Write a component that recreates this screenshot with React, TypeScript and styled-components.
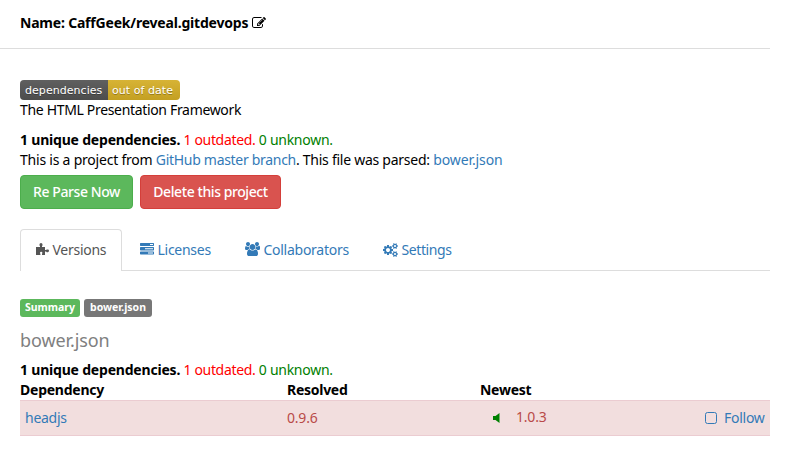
import React from "react";
import styled, { createGlobalStyle } from "styled-components";

const Global = createGlobalStyle`
  * { box-sizing: border-box; }
  body { margin: 0; background: #fff; color: #000; font: 14px/20px "Noto Sans", sans-serif; }
`;

const Page = styled.main`width: 770px; height: 462px; overflow: hidden;`;
const Header = styled.header`
  height: 49px; padding: 13px 20px 0; border-bottom: 1px solid #ddd;
  display: flex; gap: 4px;
`;
const Content = styled.div`padding: 31px 0 0 20px;`;
const Fit = styled.span<{ $ls?: number }>`
  white-space: pre; letter-spacing: ${(p) => p.$ls ?? -0.27}px;
`;
const Bold = styled(Fit)`font-weight: 700;`;
const Link = styled(Fit)`color: #337ab7;`;
const Red = styled(Fit)`color: #ff0000;`;
const Green = styled(Fit)`color: #008000;`;
const Line = styled.div<{ $top?: number }>`
  display: flex; height: 20px; margin-top: ${(p) => p.$top ?? 0}px;
`;
const Badge = styled.div`
  display: flex; width: 160px; height: 20px; border-radius: 4px; overflow: hidden;
  color: #fff; font: 11px/21px "DejaVu Sans", sans-serif; text-shadow: 0 1px 0 rgba(1,1,1,.3);
`;
const BadgePart = styled.span<{ $w: number; $bg: string; $pad: number }>`
  width: ${(p) => p.$w}px; padding-left: ${(p) => p.$pad}px; white-space: nowrap; letter-spacing: .05px;
  background: linear-gradient(rgba(187,187,187,.1), rgba(0,0,0,.1)), ${(p) => p.$bg};
`;
const Buttons = styled.div`display: flex; gap: 7px; margin-top: 5px;`;
const Button = styled.button<{ $w: number; $bg: string; $line: string }>`
  width: ${(p) => p.$w}px; height: 34px; padding: 0; border: 1px solid ${(p) => p.$line};
  border-radius: 4px; background: ${(p) => p.$bg}; color: #fff;
  font: 500 14px/20px "Noto Sans", sans-serif; white-space: nowrap; letter-spacing: -.42px;
`;
const Tabs = styled.nav`
  display: flex; height: 42px; margin-top: 20px; border-bottom: 1px solid #ddd; color: #337ab7;
`;
const Tab = styled.div<{ $w: number; $active?: boolean }>`
  display: flex; gap: 3.500px; width: ${(p) => p.$w}px; height: 42px; padding: 10px 0 0 15px; margin-right: 2px;
  border: 1px solid ${(p) => (p.$active ? "#ddd" : "transparent")}; border-bottom: 0;
  border-radius: 4px 4px 0 0;
  ${(p) => p.$active && "background: #fff; color: #555;"}
`;
const Glyph = styled.svg<{ $top?: number }>`
  display: block; flex: none; fill: currentColor; margin-top: ${(p) => p.$top ?? 0}px;
`;
const Labels = styled.div`display: flex; gap: 4px; margin-top: 28px;`;
const Label = styled.span<{ $w: number; $bg: string }>`
  width: ${(p) => p.$w}px; height: 18px; border-radius: 3px; background: ${(p) => p.$bg};
  color: #fff; font-weight: 700; font-size: 10.5px; line-height: 17px; text-align: center; white-space: nowrap;
`;
const Heading = styled.h4`
  margin: 13px 0 10px; height: 20px; font-size: 18px; line-height: 20px; font-weight: 400; color: #808080;
  letter-spacing: -.1px;
`;
const Columns = styled.div`display: grid; grid-template-columns: 267px 193px 290px; height: 20px;`;
const Row = styled.div`
  display: grid; grid-template-columns: 262px 206px 212px 1fr; height: 36px; padding: 7px 0 0 5px;
  background: #f2dede; border: solid #ebccd1; border-width: 1px 0; color: #b94a48;
`;
const Newest = styled.div`display: flex; gap: 16px; margin-top: -1px;`;
const Follow = styled.div`display: flex; gap: 7px; color: #337ab7;`;

const COG_SMALL =
  "v140q0 16-149 31-12 27-30 52 51 113 51 138 0 4-4 7-122 71-124 71-8 0-46-47t-52-68q-20 2-30 2t-30-2q-14 21-52 68t-46 47q-2 0-124-71-4-3-4-7 0-25 51-138-18-25-30-52-149-15-149-31v-140q0-16 149-31 13-29 30-52-51-113-51-138 0-4 4-7 4-2 35-20t59-34 30-16q8 0 46 46.5t52 67.5q20-2 30-2t30 2q51-71 92-112l6-2q4 0 124 70 4 3 4 7 0 25-51 138 17 23 30 52 149 15 149 31z";

const EditIcon = () => (
  <Glyph $top={3} width="14" height="14" viewBox="0 0 1792 1792">
    <path d="M888 1184l116-116-152-152-116 116v56h96v96h56zm440-720q-16-16-33 1l-350 350q-17 17-1 33t33-1l350-350q17-17 1-33zm80 594v190q0 119-84.5 203.5t-203.5 84.5h-832q-119 0-203.5-84.5t-84.5-203.5v-832q0-119 84.5-203.5t203.5-84.5h832q63 0 117 25 15 7 18 23 3 17-9 29l-49 49q-14 14-32 8-23-6-45-6h-832q-66 0-113 47t-47 113v832q0 66 47 113t113 47h832q66 0 113-47t47-113v-126q0-13 9-22l64-64q15-15 35-7t20 29zm-96-738l288 288-672 672h-288v-288zm444 132l-92 92-288-288 92-92q28-28 68-28t68 28l152 152q28 28 28 68t-28 68z" />
  </Glyph>
);
const PuzzleIcon = () => (
  <Glyph $top={3} width="13" height="13" viewBox="0 0 13 13">
    <path d="M0 4h4V3L3.500 2.500V1.500q0-1.500 1.500-1.500t1.500 1.500v1L6 3v1h3v3h1l.8-.6h1q1.200 0 1.200 1.400t-1.200 1.400h-1L10 8.600H9V12H6v-1l.4-1q0-1.200-1.200-1.200T4 10l.4 1v1H0z" />
  </Glyph>
);
const TasksIcon = () => (
  <Glyph $top={3} width="14" height="12" viewBox="0 0 14 12">
    <path fillRule="evenodd" d="M.5 0h13l.5.5v2l-.5.5H.5L0 2.500v-2zM10 1v1h3V1zM.5 4h13l.5.5v2.500l-.5.500H.5L0 7V4.500zM5 5.250v1h8v-1zM.5 8.500h13l.5.5v2l-.5.5H.5L0 11V9zM8 9.500v1h5v-1z" />
  </Glyph>
);
const UsersIcon = () => (
  <Glyph $top={2} width="15" height="14" viewBox="0 0 1920 1792">
    <path d="M593 896q-162 5-265 128h-134q-82 0-138-40.5t-56-118.5q0-353 124-353 6 0 43.5 21t97.5 42.5 119 21.5q67 0 133-23-5 37-5 66 0 159 93 287zm1071 637q0 120-73 189.500t-194 69.500h-874q-121 0-194-69.500t-73-189.500q0-53 3.500-103.500t14-109 26.500-108.500 43-97.500 62-81 85.500-53.500 111.500-20q10 0 43 21.500t73 48 107 48 135 21.500 135-21.500 107-48 73-48 43-21.500q61 0 111.500 20t85.500 53.500 62 81 43 97.500 26.500 108.500 14 109 3.500 103.500zM640 256q0 106-75 181t-181 75-181-75-75-181 75-181 181-75 181 75 75 181zM1344 640q0 159-112.500 271.500t-271.500 112.500-271.500-112.500-112.500-271.500 112.500-271.500 271.500-112.500 271.500 112.500 112.500 271.500zM1920 865q0 78-56 118.500t-138 40.500h-134q-103-123-265-128 93-128 93-287 0-29-5-66 66 23 133 23 59 0 119-21.500t97.500-42.500 43.500-21q124 0 124 353zM1792 256q0 106-75 181t-181 75-181-75-75-181 75-181 181-75 181 75 75 181z" />
  </Glyph>
);
const CogsIcon = () => (
  <Glyph $top={3} width="15" height="14" viewBox="0 0 1920 1792">
    <path d={`M896 896q0-106-75-181t-181-75-181 75-75 181 75 181 181 75 181-75 75-181zm768 512q0-52-38-90t-90-38-90 38-38 90q0 53 37.5 90.5t90.5 37.5 90.5-37.5 37.5-90.5zm0-1024q0-52-38-90t-90-38-90 38-38 90q0 53 37.5 90.5t90.5 37.5 90.5-37.5 37.5-90.5zm-384 421v185q0 10-7 19.5t-16 10.5l-155 24q-11 35-32 76 34 48 90 115 7 11 7 20 0 12-7 19-23 30-82.5 89.5t-78.5 59.5q-11 0-21-7l-115-90q-37 19-77 31-11 108-23 155-7 24-30 24h-186q-11 0-20-7.5t-10-17.5l-23-153q-34-10-75-31l-118 89q-7 7-20 7-11 0-21-8-144-133-144-160 0-9 7-19 10-14 41-53t47-61q-23-44-35-82l-152-24q-10-1-17-9.5t-7-19.5v-185q0-10 7-19.5t16-10.5l155-24q11-35 32-76-34-48-90-115-7-11-7-20 0-12 7-20 22-30 82-89t79-59q11 0 21 7l115 90q34-18 77-32 11-108 23-154 7-24 30-24h186q11 0 20 7.5t10 17.5l23 153q34 10 75 31l118-89q8-7 20-7 11 0 21 8 144 133 144 160 0 8-7 19-12 16-42 54t-45 60q23 48 34 82l152 23q10 2 17 10.5t7 19.5zM1920 1338${COG_SMALL}M1920 314${COG_SMALL}`} />
  </Glyph>
);

const Counts = ({ top }: { top?: number }) => (
  <Line $top={top}>
    <Bold $ls={-0.2}>1 unique dependencies.</Bold><Red $ls={-0.33}> 1 outdated.</Red><Green $ls={-0.27}> 0 unknown.</Green>
  </Line>
);

export default function App() {
  return (
    <Page>
      <Global />
      <Header><Bold $ls={-0.2}>Name: CaffGeek/reveal.gitdevops</Bold><EditIcon /></Header>
      <Content>
        <Badge>
          <BadgePart $w={88} $bg="#555" $pad={5}>dependencies</BadgePart>
          <BadgePart $w={72} $bg="#dab226" $pad={4}>out of date</BadgePart>
        </Badge>
        <Line><Fit $ls={-0.33}>The HTML Presentation Framework</Fit></Line>
        <Counts top={10} />
        <Line>
          <Fit $ls={-0.22}>This is a project from </Fit><Link $ls={-0.3}>GitHub master branch</Link>
          <Fit $ls={-0.26}>. This file was parsed: </Fit><Link $ls={-0.1}>bower.json</Link>
        </Line>
        <Buttons>
          <Button $w={113} $bg="#5cb85c" $line="#4cae4c">Re Parse Now</Button>
          <Button $w={141} $bg="#d9534f" $line="#d43f3a">Delete this project</Button>
        </Buttons>
        <Tabs>
          <Tab $w={102} $active><PuzzleIcon /><Fit>Versions</Fit></Tab>
          <Tab $w={103}><TasksIcon /><Fit>Licenses</Fit></Tab>
          <Tab $w={136}><UsersIcon /><Fit>Collaborators</Fit></Tab>
          <Tab $w={102}><CogsIcon /><Fit $ls={-0.4}>Settings</Fit></Tab>
        </Tabs>
        <Labels>
          <Label $w={60} $bg="#5cb85c">Summary</Label>
          <Label $w={68} $bg="#777">bower.json</Label>
        </Labels>
        <Heading>bower.json</Heading>
        <Counts />
        <Columns><Bold $ls={-0.24}>Dependency</Bold><Bold>Resolved</Bold><Bold>Newest</Bold></Columns>
        <Row>
          <Link>headjs</Link>
          <Fit $ls={-0.2}>0.9.6</Fit>
          <Newest>
            <Glyph $top={6} width="7" height="10" viewBox="0 0 7 10" color="#008000"><path d="M0 3h2.500L6.500 0v10L2.500 7H0z" /></Glyph>
            <Fit $ls={-0.2}>1.0.3</Fit>
          </Newest>
          <Follow>
            <Glyph $top={4} width="12" height="12" viewBox="0 0 12 12"><rect x=".5" y=".5" width="11" height="11" rx="2" fill="none" stroke="currentColor" /></Glyph>
            <Fit>Follow</Fit>
          </Follow>
        </Row>
      </Content>
    </Page>
  );
}
